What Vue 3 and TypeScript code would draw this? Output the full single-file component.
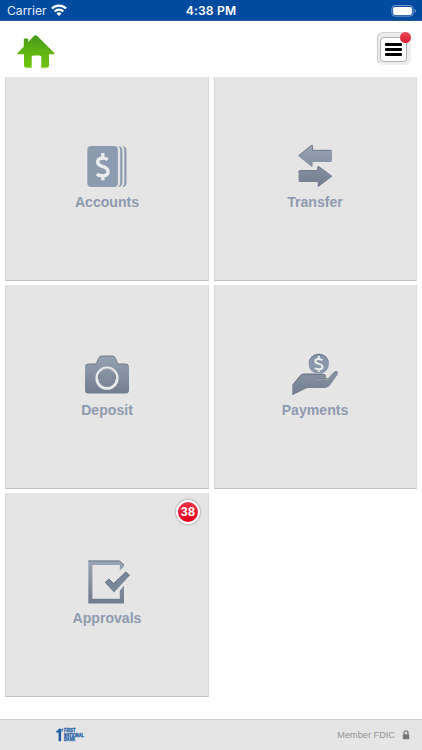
<script setup lang="ts">
interface Tile {
  id: string
  label: string
  badge?: number
}

const tiles: Tile[] = [
  { id: 'accounts', label: 'Accounts' },
  { id: 'transfer', label: 'Transfer' },
  { id: 'deposit', label: 'Deposit' },
  { id: 'payments', label: 'Payments' },
  { id: 'approvals', label: 'Approvals', badge: 38 },
]
</script>

<template>
  <div class="screen">
    <div class="status">
      <div class="carrier">
        <span>Carrier</span>
        <svg class="wifi" width="16" height="12" viewBox="0 0 16 12">
          <g fill="none" stroke="#fff" stroke-width="2.2">
            <path d="M.9 4.6a10 10 0 0 1 14.2 0" />
            <path d="M3.6 7.5a6.2 6.2 0 0 1 8.8 0" />
          </g>
          <path d="M5.5 9.4a3.6 3.6 0 0 1 5 0L8 12z" fill="#fff" />
        </svg>
      </div>
      <div class="time">4:38 PM</div>
      <svg class="battery" width="26" height="12" viewBox="0 0 26 12">
        <rect x=".9" y=".6" width="21.2" height="10.5" rx="3" fill="none" stroke="#7ea2d0" />
        <rect x="2.1" y="1.9" width="18.8" height="8" rx="1.8" fill="#fff" />
        <path d="M23.6 4v4q1.3-.5 1.3-2t-1.3-2z" fill="#7ea2d0" />
      </svg>
    </div>

    <header class="header">
      <svg class="home" width="38" height="34" viewBox="0 0 38 34">
        <defs>
          <linearGradient id="leaf" x1="0" y1="0" x2="0" y2="1">
            <stop offset="0" stop-color="#459817" />
            <stop offset=".5" stop-color="#5fb414" />
            <stop offset="1" stop-color="#70c40e" />
          </linearGradient>
        </defs>
        <path d="M17.2.8q1.4-1.2 2.8 0L37.3 18q.7 1-.6 1.2h-4.7v11.2q0 2.4-2.4 2.4h-5.3V22q0-1.6-1.6-1.6h-6.4q-1.6 0-1.6 1.6v10.8H9.4Q7 32.8 7 30.4V19.2H1Q-.2 18.9.5 18l6.3-6.2V4.2q0-.8.8-.8h2.8q.8 0 .8.8v2.7z" fill="url(#leaf)" />
      </svg>
      <button class="menu" aria-label="Menu">
        <span class="menu-face"><i /><i /><i /></span>
        <span class="dot" />
      </button>
    </header>

    <main class="grid">
      <section v-for="tile in tiles" :key="tile.id" class="tile">
        <svg class="icon" width="60" height="48" viewBox="0 0 60 48">
          <defs>
            <linearGradient :id="'steel-' + tile.id" gradientUnits="userSpaceOnUse" x1="0" y1="3" x2="0" y2="46">
              <stop offset="0" stop-color="#98a5b7" />
              <stop offset="1" stop-color="#707c8d" />
            </linearGradient>
          </defs>
          <template v-if="tile.id === 'accounts'">
            <rect x="10.3" y="4" width="30.6" height="41" rx="4" fill="#8d9bb0" />
            <path d="M41.2 4q4.2.5 4.2 4.6v31.8q0 4.1-4.2 4.6 2-1.4 2-4.4V8.4q0-3-2-4.4zM45.4 4q4.1.5 4.1 4.6v31.8q0 4.1-4.1 4.6 1.9-1.4 1.9-4.4V8.4q0-3-1.9-4.4z" fill="#8d9bb0" />
            <path d="M30.6 17.9q-1.8-1.8-4.8-1.8-5.1 0-5.1 3.9 0 2.9 4.7 4.3 5.7 1.7 5.7 5.1 0 4.4-5.6 4.4-3.7 0-5.7-1.7M25.8 11v5M25.8 33.6V38.2" fill="none" stroke="#ebecee" stroke-width="3.4" />
          </template>
          <g v-else-if="tile.id === 'transfer'" :fill="'url(#steel-' + tile.id + ')'">
            <path d="M13.2 14 26.2 3.6q1.4-.8 1.4.6V8.3h17.8q1.6 0 1.6 1.6v8.4q0 1.6-1.6 1.6H27.6V24q0 1.4-1.4.6z" />
            <path d="M47 34.5 34 24.8q-1.3-.8-1.3.6v3.2H15.2q-1.6 0-1.6 1.6v8.2q0 1.6 1.6 1.6h17.5V44q0 1.4 1.3.6z" />
            <path d="M13.5 13.7 26.2 3.6q1.4-.8 1.4.6V8.3h18.1l1 .8M32.7 28.6H15.2q-1.6 0-1.6 1.6M47 34.3 34 24.8q-1.3-.8-1.3.6v3.2" fill="none" stroke="#5a6473" stroke-width=".8" />
          </g>
          <template v-else-if="tile.id === 'deposit'">
            <path d="M11.5 14h6.2q1.5 0 2.1-1.4l1.8-4.4Q22.5 6 24.9 6h10.2q2.4 0 3.3 2.2l1.8 4.4q.6 1.4 2.1 1.4h6.2q3.5 0 3.5 3.5V40q0 3.5-3.5 3.5h-37Q8 43.5 8 40V17.5Q8 14 11.5 14z" :fill="'url(#steel-' + tile.id + ')'" />
            <path d="M8.5 16q.8-2 3-2h6.2q1.5 0 2.1-1.4l1.8-4.4Q22.5 6 24.9 6h10.2q2.4 0 3.3 2.2l1.8 4.4q.6 1.4 2.1 1.4h6.2q2.2 0 3 2" fill="none" stroke="#5d6877" stroke-width=".8" />
            <circle cx="30" cy="28.2" r="10.2" fill="none" stroke="#e9eaec" stroke-width="2.8" />
            <path d="M21.3 29a8.8 8.8 0 1 1 17.4 0" fill="none" stroke="#596475" stroke-width=".7" />
          </template>
          <template v-else-if="tile.id === 'payments'">
            <circle cx="33.8" cy="13.8" r="10.2" fill="#8997ab" />
            <path d="M24.3 11.2a10.2 10.2 0 0 1 19 0" fill="none" stroke="#5b6678" stroke-width=".7" />
            <path d="M37.3 10.4q-1.3-1.5-3.5-1.5-3.4 0-3.4 2.3 0 1.8 3.4 2.7 3.7.9 3.7 3 0 2.4-3.8 2.4-2.5 0-3.8-1.4M33.8 5.8v3.1M33.8 19.3v2.5" fill="none" stroke="#ecedef" stroke-width="2" />
            <path d="M24 23.4h13.2q2.8 0 4.2 2.4" fill="none" stroke="#e5e5e5" stroke-width="1" />
            <path d="M7.3 45.3V36.3q0-1 .7-1.8l7-8.6q1.7-1.9 3.8-1.9h18.2q2.4 0 4.1 2.3v2.5H30.5v.8h11.2q1.5 0 2.4-1.2l5-5.9q1.3-1.3 3-.7 1.8.8.5 2.7l-7.6 10.8Q42.9 38 40 38H23.4q-1.8 0-3.3 1z" :fill="'url(#steel-' + tile.id + ')'" />
            <path d="M7.4 35.5 15 25.9q1.7-1.9 3.8-1.9h18.2q2.4 0 4.1 2.3M30.5 28.9h11.2q1.5 0 2.4-1.2l5-5.2q1.3-1.3 3-.7" fill="none" stroke="#505a69" stroke-width=".8" />
          </template>
          <template v-else>
            <path d="M11.3 2.6h30.5q.9 0 1.5.6L47 6.8v1.6l-4.2 4.2V7.1H15.4v34.2h27.4v-8.9L47 27.8v17.7H11.3z" :fill="'url(#steel-' + tile.id + ')'" />
            <path d="M11.3 3h30.5q.9 0 1.5.6L47 7.1M15.4 41.3h27.4" fill="none" stroke="#5f6a7b" stroke-width=".8" />
            <path d="M28 24.8 31.8 21.1l4.8 4.4L49 13.9l3.7 3.7L37 34.6z" fill="#78869a" />
            <path d="m28 24.8 3.8-3.7 4.8 4.4L49 13.9l3.7 3.7" fill="none" stroke="#505c6c" stroke-width=".8" />
          </template>
        </svg>
        <span class="label">{{ tile.label }}</span>
        <span v-if="tile.badge" class="badge">{{ tile.badge }}</span>
      </section>
    </main>

    <footer class="footer">
      <div class="bank">
        <svg width="7.5" height="14" viewBox="0 0 7.5 14">
          <path d="M.2 3.3Q2.2 2.7 2.8.8h2.3v12.5H2.6V4.6H.2zM5.6.8h1.8v1h-.9v2h-.9z" fill="#1c5ca4" />
        </svg>
        <div class="bank-name"><span>FIRST</span><span>NATIONAL</span><span>BANK</span></div>
      </div>
      <div class="fdic">
        <span>Member FDIC</span>
        <svg width="8" height="10" viewBox="0 0 8 10">
          <path d="M2 4.5V2.8a2 2 0 0 1 4 0v1.7" fill="none" stroke="#777" stroke-width="1.3" />
          <rect x=".8" y="4.2" width="6.4" height="5" rx=".7" fill="#777" />
        </svg>
      </div>
    </footer>
  </div>
</template>

<style>
body {
  background: #fff;
}
</style>

<style scoped>
.screen {
  width: 422px;
  height: 750px;
  box-sizing: border-box;
  display: flex;
  flex-direction: column;
  background: #fff;
  font-family: "Liberation Sans", Arial, sans-serif;
  overflow: hidden;
}
.status {
  height: 21px;
  flex: none;
  box-sizing: border-box;
  display: grid;
  grid-template-columns: 1fr auto 1fr;
  align-items: center;
  padding: 1px 5px 0 7px;
  background: #004a9f;
  border-bottom: 1px solid #205b9d;
  color: #fff;
  font-family: Inter, sans-serif;
  line-height: 20px;
}
.carrier {
  display: flex;
  align-items: center;
  gap: 4px;
  color: #e7effa;
  font-size: 12.1px;
}
.wifi {
  margin-top: -2px;
}
.time {
  font-weight: 600;
  font-size: 12.1px;
  letter-spacing: 0.15px;
  margin-left: -2px;
}
.battery {
  justify-self: end;
  margin-top: -1px;
}
.header {
  height: 56px;
  flex: none;
  box-sizing: border-box;
  display: flex;
  justify-content: space-between;
  align-items: flex-start;
  padding: 11px 11px 0 17px;
}
.home {
  margin-top: 3px;
}
.menu {
  position: relative;
  width: 34px;
  height: 33px;
  box-sizing: border-box;
  padding: 4px 3px 2px 2px;
  border: 1px solid #efefef;
  border-top-color: #d2d2d2;
  border-left-color: #c8c8c8;
  border-radius: 6px;
  background: #ececec;
}
.menu-face {
  width: 27px;
  height: 25px;
  box-sizing: border-box;
  display: flex;
  flex-direction: column;
  align-items: center;
  justify-content: center;
  gap: 2.6px;
  border: 1px solid #b0b0b0;
  border-radius: 4px;
  background: #fff;
}
.menu-face i {
  width: 17px;
  height: 2.5px;
  border-radius: 1px;
  background: #000;
}
.dot {
  position: absolute;
  top: -1px;
  right: -1px;
  width: 11px;
  height: 11px;
  border-radius: 50%;
  background: linear-gradient(#ed4759, #d91d32);
}
.grid {
  flex: 1;
  display: grid;
  grid-template-columns: 204px 203px;
  grid-auto-rows: 203.5px;
  align-content: start;
  column-gap: 5px;
  row-gap: 4.6px;
  padding: 0 5px;
}
.tile {
  position: relative;
  box-sizing: border-box;
  display: flex;
  flex-direction: column;
  align-items: center;
  padding-top: 65.3px;
  background: #e5e5e5;
  border-left: 1px solid #d6d6d6;
  border-bottom: 1px solid #c2c2c2;
  border-right: 1px solid #dbdbdb;
}
.icon {
  flex: none;
}
.tile:nth-child(even) .icon,
.tile:nth-child(even) .label {
  margin-right: 1px;
}
.label {
  margin-top: 2.4px;
  color: #8e9bb0;
  font-size: 14.1px;
  line-height: 18px;
  font-weight: 700;
}
.badge {
  position: absolute;
  top: 7px;
  right: 8px;
  width: 24px;
  height: 24px;
  box-sizing: border-box;
  border: 2px solid #fff;
  border-radius: 50%;
  background: linear-gradient(#ed3448, #e5001a);
  box-shadow: 0 0 2px 0.5px #999;
  color: #fff;
  font-size: 12.5px;
  line-height: 20px;
  font-weight: 700;
  letter-spacing: 0.4px;
  text-align: center;
}
.footer {
  height: 31px;
  flex: none;
  box-sizing: border-box;
  display: flex;
  justify-content: space-between;
  align-items: center;
  padding: 0 12px 1px 56px;
  background: #e5e5e5;
  border-top: 1px solid #ccc;
}
.bank {
  display: flex;
  align-items: center;
  margin-top: 1px;
}
.bank-name {
  display: flex;
  flex-direction: column;
  width: 24px;
  color: #1c5ca4;
  font-size: 5px;
  line-height: 4.8px;
  font-weight: 700;
  -webkit-text-stroke: 0.3px #1c5ca4;
  transform: scaleX(0.78);
  transform-origin: left;
}
.fdic {
  display: flex;
  align-items: center;
  gap: 7px;
  color: #949494;
  font-size: 9.2px;
}
</style>
